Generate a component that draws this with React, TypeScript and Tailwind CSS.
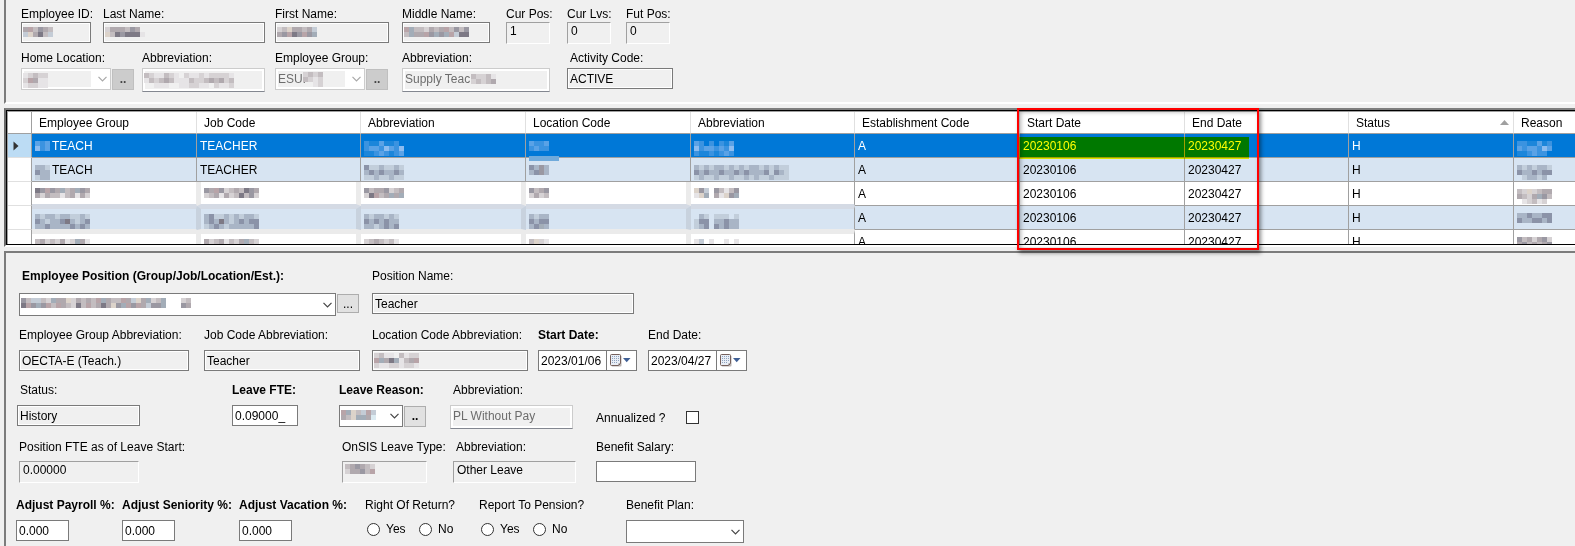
import { clsx } from "clsx";
import React from "react";

const SWATCHES: Record<string, string> = {
  "1": "#7d7985",
  "2": "#9a98a2",
  "3": "#b0a9ae",
  "4": "#c3bdc0",
  "5": "#d6d2d4",
  "6": "#e6e4e6",
  "7": "#a3adb8",
  "8": "#c4ccd6",
  "9": "#dcebf2",
  b: "#b8a4a8",
  c: "#dcd3ca",
  p: "#5aa2e6",
  q: "#3b93e0",
  r: "#8cbcf0",
  s: "#1c86da",
  t: "#70aadb",
  x: "#8b93a8",
  y: "#a9b5c6",
  z: "#c2cedb",
};

// Masked value, one character per 5px block. "." leaves the block empty.
const Mask = ({ rows }: { rows: string[] }) => (
  <svg
    aria-hidden="true"
    className="block shrink-0 overflow-visible"
    width={rows[0].length * 5}
    height="10"
    shapeRendering="crispEdges"
  >
    {rows.map((row, y) =>
      row
        .split("")
        .map((c, x) =>
          c === "." ? null : (
            <rect
              key={`${x}-${y}`}
              x={x * 5}
              y={y * 5}
              width="5"
              height="5"
              fill={SWATCHES[c]}
            />
          )
        )
    )}
  </svg>
);

type FieldProps = {
  id: string;
  label: string;
  bold?: boolean;
  indent?: boolean;
  className?: string;
  children: React.ReactNode;
};

const Field = ({ id, label, bold, indent, className, children }: FieldProps) => (
  <div className={clsx("flex flex-col items-start", className)}>
    <label
      htmlFor={id}
      className={clsx("whitespace-nowrap leading-4", {
        "font-bold": bold,
        "pl-[3px]": indent,
      })}
    >
      {label}
    </label>
    {children}
  </div>
);

const BOX = {
  edit: "h-[21px] border border-[#7a7a7a] bg-white px-[2px]",
  readonly:
    "h-[21px] border border-[#7a7a7a] bg-[#f0f0f0] px-[2px] shadow-[inset_0_0_0_1px_#fff]",
  disabled:
    "h-6 border border-[#ccc] border-b-[#838790] bg-[#f0f0f0] px-[2px] pb-[2px] text-[#6d6d6d] shadow-[inset_0_0_0_2px_#fff]",
  sunken:
    "h-[22px] border border-[#a0a0a0] border-r-white border-b-white bg-[#f0f0f0] px-[3px] pb-1",
};

type TextBoxProps = {
  id: string;
  kind: keyof typeof BOX;
  className: string;
  value?: string;
  mask?: string[];
  maskClass?: string;
};

const TextBox = ({
  id,
  kind,
  className,
  value = "",
  mask,
  maskClass = "left-[2px] top-[5px]",
}: TextBoxProps) => (
  <div className={clsx("relative", className)}>
    <input
      id={id}
      type="text"
      defaultValue={value}
      readOnly={kind !== "edit"}
      disabled={kind === "disabled"}
      className={clsx("block w-full outline-none", BOX[kind])}
    />
    {mask && (
      <div className={clsx("pointer-events-none absolute", maskClass)}>
        <Mask rows={mask} />
      </div>
    )}
  </div>
);

type ComboProps = {
  id: string;
  className: string;
  selectClass: string;
  value?: string;
  disabled?: boolean;
  mask?: string[];
  maskClass?: string;
};

const Combo = ({
  id,
  className,
  selectClass,
  value = "",
  disabled,
  mask,
  maskClass = "left-[2px] top-[5px]",
}: ComboProps) => (
  <div className={clsx("relative", className)}>
    <select
      id={id}
      disabled={disabled}
      className={clsx(
        "block w-full appearance-none border px-[2px] opacity-100 outline-none",
        disabled
          ? "border-[#ccc] bg-white bg-[linear-gradient(#f0f0f0,#f0f0f0)] bg-[length:67px_16px] bg-[position:2px_2px] bg-no-repeat text-[#6d6d6d]"
          : "border-[#7a7a7a] bg-white",
        selectClass
      )}
    >
      <option>{value}</option>
    </select>
    {mask && (
      <div className={clsx("pointer-events-none absolute", maskClass)}>
        <Mask rows={mask} />
      </div>
    )}
    <svg
      aria-hidden="true"
      className="pointer-events-none absolute inset-y-0 right-1 my-auto"
      width="9"
      height="6"
      viewBox="0 0 9 6"
      fill="none"
      stroke={disabled ? "#a8a8a8" : "#444"}
      strokeWidth="1.2"
    >
      <path d="M0.5 0.8 4.5 4.8 8.5 0.8" />
    </svg>
  </div>
);

const LookupButton = ({
  label,
  className,
  children,
}: {
  label: string;
  className: string;
  children: React.ReactNode;
}) => (
  <button
    type="button"
    aria-label={label}
    className={clsx(
      "ml-px mt-px flex w-[22px] items-end justify-center border leading-4",
      className
    )}
  >
    {children}
  </button>
);

const DateBox = ({ id, value }: { id: string; value: string }) => (
  <div className="flex h-[21px] w-[99px] border border-[#7a7a7a] bg-white">
    <input
      id={id}
      type="text"
      defaultValue={value}
      className="h-full w-[67px] px-[2px] outline-none"
    />
    <button
      type="button"
      aria-label="Open calendar"
      className="flex flex-1 items-center border-l border-[#7a7a7a] pl-[3px]"
    >
      <svg width="21" height="13" viewBox="0 0 21 13" aria-hidden="true">
        <rect x="1.5" y="1.5" width="10" height="11" rx="1" fill="#b9b4b2" />
        <path
          d="M0.5 1.5a1 1 0 0 1 1-1h8a1 1 0 0 1 1 1v8l-2 2h-7a1 1 0 0 1-1-1z"
          fill="#e9eef6"
          stroke="#75605c"
        />
        <path
          d="M2 2.5h7M2 4.5h7M2 6.5h7M2 8.5h6"
          stroke="#8fa3bf"
          strokeDasharray="1 1"
        />
        <path d="M8.5 11.5v-2h2z" fill="#75605c" />
        <path d="M13 4h7.5L16.7 8.2z" fill="#3f5f95" />
      </svg>
    </button>
  </div>
);

const YesNo = ({ name, legend }: { name: string; legend: string }) => (
  <fieldset>
    <legend className="whitespace-nowrap leading-4">{legend}</legend>
    <div className="mt-[7px] flex pl-[2px]">
      {["Yes", "No"].map((option) => (
        <label key={option} className="flex h-[18px] w-[52px] items-center gap-[6px]">
          <input
            type="radio"
            name={name}
            className="size-[13px] appearance-none rounded-full border border-[#333] bg-white"
          />
          {option}
        </label>
      ))}
    </div>
  </fieldset>
);

const COLUMNS = [
  { title: "Employee Group", width: "w-[165px]" },
  { title: "Job Code", width: "w-[164px]" },
  { title: "Abbreviation", width: "w-[165px]" },
  { title: "Location Code", width: "w-[165px]" },
  { title: "Abbreviation", width: "w-[164px]" },
  { title: "Establishment Code", width: "w-[165px]" },
  { title: "Start Date", width: "w-[165px]" },
  { title: "End Date", width: "w-[164px]" },
  { title: "Status", width: "w-[165px]" },
  { title: "Reason", width: "border-r-0" },
];

type Cell = { text?: string; mask?: string[] };

const tail: Cell[] = [
  { text: "A" },
  { text: "20230106" },
  { text: "20230427" },
  { text: "H" },
];

const ROWS: Cell[][] = [
  [
    { mask: ["pqp", "rqp"], text: "TEACH" },
    { text: "TEACHER" },
    { mask: ["qsspssq.", "qppqrpqr", "ssqpqsqp"] },
    { mask: ["pqqp", "qpqq", "....", "tttttt"] },
    { mask: ["pq.q.qsp", "rqppqpqr", "qssqsqpq"] },
    ...tail,
    { mask: ["qqsspsq", "pqppqrp", "ssqpqq."] },
  ],
  [
    { mask: ["yyz", "xyy", "zyy"], text: "TEACH" },
    { text: "TEACHER" },
    { mask: ["xzzyzzyz", "yxyxyyxy", "zzyzzyzz"] },
    { mask: ["xy2y", "yx2y"] },
    { mask: ["yzyzyyzyzyzyyzyzyzz", "xyxyyxyyxyxyyyxzxyz", "zyzzyzzyzzyzyzzyzzz"] },
    ...tail,
    { mask: ["yzyzyyz", "xyyxyxx", ".zyyzy."] },
  ],
  [
    { mask: ["12b23743723", "35344643635"] },
    { mask: ["23b25434123", "54363541425"] },
    { mask: ["24332543", "51b43737"] },
    { mask: ["2432", "5354"] },
    { mask: ["c28.24642", "6c7.36c27"] },
    ...tail,
    { mask: ["45c5433", "3453724", ".65465."] },
  ],
  [
    { mask: ["yzyyzyyzzyz", "xyzyyx1yzyx", "yyxyyyyxyxy"] },
    { mask: ["yxzzyzyzyyz", "yxy1yzyxyxx", "zyxyzyyyyyx"] },
    { mask: ["yzyyzyz", "xyxyxyy", "yyzyxyx"] },
    { mask: ["yzyy", "xyxx", "yx7y"] },
    { mask: [".yz.zzz.z", "zxx.yyxyy", "zyx.xyxyy"] },
    ...tail,
    { mask: ["yyxyyxx", "xyyxxyx"] },
  ],
  [
    { mask: ["43545365736", "32434723532"] },
    { mask: ["35436453745", "24314532423"] },
    { mask: ["5434546", "2315342"] },
    { mask: ["4c56", "3c52"] },
    { mask: ["68.6..6.6", "c28.23b27"] },
    ...tail,
    { mask: ["2435325", "3243432"] },
  ],
];

// Right edge of each cell, the masked rows smear it into a wide band.
const edge = (row: number, col: number) => {
  if (col === COLUMNS.length - 1) return "";
  if (row < 2 || col > 3) return "border-r border-r-[#a0a0a0]";
  const color =
    row === 3 ? "border-x-[#c8d2de]" : "border-x-[#ebebeb]";
  if (col === 0) return clsx("border-r", color);
  return clsx("border-r-[5px]", col === 1 && "border-l-4", color);
};

const rule = (row: number, col: number) => {
  if (row < 2 || col > 4) return "border-b border-b-[#a0a0a0]";
  if (row === 2) return "border-b-2 border-b-[#d4dae4]";
  if (row === 3)
    return "border-t-[3px] border-t-[#d4dae4] border-b border-b-[#ebebeb]";
  return "border-t-4 border-t-[#ebebeb] border-b border-b-[#a0a0a0]";
};

const PositionGrid = () => (
  <div className="relative mt-1 border-2 border-r-0 border-[#696969] border-t-[#808080] border-b-white">
    <div className="h-[135px] overflow-hidden border border-r-0 border-black">
      <div className="border-l border-t border-[#a0a0a0] bg-white">
        <table className="w-full table-fixed border-separate border-spacing-0 text-left">
          <thead>
            <tr className="h-[22px]">
              <th
                aria-label="Row marker"
                className="w-6 border-b border-r border-[#a0a0a0] p-0"
              />
              {COLUMNS.map(({ title, width }, i) => (
                <th
                  key={i}
                  className={clsx(
                    "whitespace-nowrap border-b border-r border-b-[#a0a0a0] border-r-[#e0e0e0] py-0 pl-[7px] pr-1 font-normal leading-4",
                    width
                  )}
                >
                  <span className="flex items-center justify-between">
                    {title}
                    {title === "Status" && (
                      <svg width="9" height="5" aria-hidden="true">
                        <path d="M0 5 4.5 0 9 5z" fill="#a0a0a0" />
                      </svg>
                    )}
                  </span>
                </th>
              ))}
            </tr>
          </thead>
          <tbody>
            {ROWS.map((cells, row) => (
              <tr
                key={row}
                className={clsx("h-6", {
                  "bg-[#0078d7] text-white": row === 0,
                  "bg-[#d7e4f2]": row % 2 === 1,
                })}
              >
                <td
                  className={clsx(
                    "border-b border-r border-b-[#e0e0e0] border-r-[#a0a0a0] p-0 pl-[5px]",
                    row === 0 ? "bg-[#bcdcf4]" : "bg-white"
                  )}
                >
                  {row === 0 && (
                    <svg width="7" height="10" aria-hidden="true">
                      <path d="M0.5 0.5v9l5-4.5z" fill="#333" />
                    </svg>
                  )}
                </td>
                {cells.map(({ text, mask }, col) => (
                  <td
                    key={col}
                    className={clsx(
                      "py-0 pl-[3px] pr-0 leading-4",
                      edge(row, col),
                      rule(row, col)
                    )}
                  >
                    <span className="flex h-4 items-center gap-[2px]">
                      {mask && <Mask rows={mask} />}
                      {text}
                    </span>
                  </td>
                ))}
              </tr>
            ))}
          </tbody>
        </table>
      </div>
    </div>
    {/* highlighter and callout frame over the date columns */}
    <div className="pointer-events-none absolute left-[1013px] top-[27px] h-[22px] w-[230px] bg-[#ffff00] mix-blend-multiply" />
    <div className="pointer-events-none absolute -top-[2px] left-[1011px] h-[142px] w-[242px] border-2 border-[#ff0000] shadow-[2px_3px_4px_rgba(0,0,0,0.45),inset_2px_2px_4px_rgba(0,0,0,0.3)]" />
  </div>
);

const EmployeeHeader = () => (
  <section className="grid grid-cols-[82px_39px_133px_127px_104px_61px_59px_auto] gap-y-[6px] border-b-2 border-l-2 border-b-white border-l-[#7c7c7c] pb-[10px] pl-[15px] pt-[6px]">
    <Field id="employee-id" label="Employee ID:">
      <TextBox id="employee-id" kind="readonly" className="w-[70px]" mask={["3b4234", "8c3148"]} />
    </Field>
    <Field id="last-name" label="Last Name:" className="col-span-2">
      <TextBox id="last-name" kind="readonly" className="w-[162px]" mask={["5333423.", "c4121116"]} />
    </Field>
    <Field id="first-name" label="First Name:">
      <TextBox id="first-name" kind="readonly" className="w-[114px]" mask={["54c33438", "32b12b27"]} />
    </Field>
    <Field id="middle-name" label="Middle Name:">
      <TextBox id="middle-name" kind="readonly" className="w-[88px]" mask={["b7445343b4242", "4733b2727b811"]} />
    </Field>
    <Field id="cur-pos" label="Cur Pos:">
      <TextBox id="cur-pos" kind="sunken" className="w-11" value="1" />
    </Field>
    <Field id="cur-lvs" label="Cur Lvs:">
      <TextBox id="cur-lvs" kind="sunken" className="w-11" value="0" />
    </Field>
    <Field id="fut-pos" label="Fut Pos:">
      <TextBox id="fut-pos" kind="sunken" className="w-11" value="0" />
    </Field>

    <Field id="home-location" label="Home Location:" className="col-span-2 gap-[2px]">
      <div className="flex">
        <Combo
          id="home-location"
          className="w-[90px]"
          selectClass="h-[22px]"
          disabled
          mask={["65455", "5b366", "65566"]}
        />
        <LookupButton
          label="Find home location"
          className="h-[21px] border-[#bfbfbf] bg-[#ccc] pb-[2px] font-bold text-[#444]"
        >
          ..
        </LookupButton>
      </div>
    </Field>
    <Field id="home-abbr" label="Abbreviation:" className="gap-[2px]">
      <TextBox
        id="home-abbr"
        kind="disabled"
        className="w-[123px]"
        mask={["4566456.5665655556", "645434666455434354", "..666..665566.5665"]}
      />
    </Field>
    <Field id="employee-group" label="Employee Group:" className="gap-[2px]">
      <div className="flex">
        <Combo
          id="employee-group"
          className="w-[90px]"
          selectClass="h-[22px]"
          disabled
          value="ESUF"
          mask={["5454", "4565", "..65"]}
          maskClass="left-7 top-1"
        />
        <LookupButton
          label="Find employee group"
          className="h-[21px] border-[#bfbfbf] bg-[#ccc] pb-[2px] font-bold text-[#444]"
        >
          ..
        </LookupButton>
      </div>
    </Field>
    <Field id="group-abbr" label="Abbreviation:" className="col-span-2 gap-[2px]">
      <TextBox
        id="group-abbr"
        kind="disabled"
        className="w-[148px]"
        value="Supply Teac"
        mask={["45546", "54543"]}
        maskClass="left-[69px] top-[6px]"
      />
    </Field>
    <Field id="activity-code" label="Activity Code:" indent className="col-span-2 gap-[2px]">
      <TextBox id="activity-code" kind="readonly" className="w-[106px]" value="ACTIVE" />
    </Field>
  </section>
);

const PositionDetails = () => (
  <section className="mt-1 flex-1 border-l-2 border-t-2 border-l-[#7c7c7c] border-t-[#7c7c7c] pt-[15px]">
    <div className="grid grid-cols-[353px_auto] pl-[13px]">
      <Field
        id="position"
        label="Employee Position (Group/Job/Location/Est.):"
        bold
        indent
        className="gap-[9px]"
      >
        <div className="flex">
          <Combo
            id="position"
            className="w-[317px]"
            selectClass="h-[23px]"
            mask={["248845733c53434b7344b38c37547...54", "1b272b4b34514b4313c27b2b38227...23"]}
          />
          <LookupButton label="Find position" className="h-[19px] border-[#adadad] bg-[#e1e1e1]">
            ...
          </LookupButton>
        </div>
      </Field>
      <Field id="position-name" label="Position Name:" className="gap-[9px]">
        <TextBox id="position-name" kind="readonly" className="w-[262px]" value="Teacher" />
      </Field>
    </div>

    <div className="mt-[11px] grid grid-cols-[185px_168px_166px_110px_auto] pl-[13px]">
      <Field id="eg-abbr" label="Employee Group Abbreviation:" className="gap-[7px]">
        <TextBox id="eg-abbr" kind="readonly" className="w-[170px]" value="OECTA-E (Teach.)" />
      </Field>
      <Field id="jc-abbr" label="Job Code Abbreviation:" className="gap-[7px]">
        <TextBox id="jc-abbr" kind="readonly" className="w-[156px]" value="Teacher" />
      </Field>
      <Field id="lc-abbr" label="Location Code Abbreviation:" className="gap-[7px]">
        <TextBox
          id="lc-abbr"
          kind="readonly"
          className="w-[156px]"
          mask={["5466.4655", "b7317643b", "566556556"]}
          maskClass="left-[2px] top-[3px]"
        />
      </Field>
      <Field id="start-date" label="Start Date:" bold className="gap-[7px]">
        <DateBox id="start-date" value="2023/01/06" />
      </Field>
      <Field id="end-date" label="End Date:" className="gap-[7px]">
        <DateBox id="end-date" value="2023/04/27" />
      </Field>
    </div>

    <div className="mt-[11px] grid grid-cols-[215px_107px_111px_146px_auto] pl-[11px]">
      <Field id="status" label="Status:" indent className="gap-[7px]">
        <TextBox id="status" kind="readonly" className="w-[123px]" value="History" />
      </Field>
      <Field id="leave-fte" label="Leave FTE:" bold className="gap-[7px]">
        <TextBox id="leave-fte" kind="edit" className="w-[66px]" value="0.09000_" />
      </Field>
      <Field id="leave-reason" label="Leave Reason:" bold className="gap-[7px]">
        <div className="flex">
          <Combo
            id="leave-reason"
            className="w-16"
            selectClass="h-[22px]"
            mask={["b7c48b8", "34c7739"]}
          />
          <LookupButton
            label="Find leave reason"
            className="h-[21px] border-[#adadad] bg-[#e1e1e1] pb-[2px] font-bold"
          >
            ..
          </LookupButton>
        </div>
      </Field>
      <Field id="reason-abbr" label="Abbreviation:" indent className="gap-[7px]">
        <TextBox id="reason-abbr" kind="disabled" className="w-[123px]" value="PL Without Pay" />
      </Field>
      <div className="flex items-start pt-7">
        <label htmlFor="annualized" className="w-[90px] leading-4">
          Annualized ?
        </label>
        <input
          id="annualized"
          type="checkbox"
          className="mt-px size-[13px] appearance-none border border-[#333] bg-white"
        />
      </div>
    </div>

    <div className="mt-[10px] grid grid-cols-[323px_111px_143px_auto] pl-[13px]">
      <Field id="position-fte" label="Position FTE as of Leave Start:" className="gap-[6px]">
        <TextBox id="position-fte" kind="sunken" className="w-[120px]" value="0.00000" />
      </Field>
      <Field id="onsis-type" label="OnSIS Leave Type:" className="gap-[6px]">
        <TextBox
          id="onsis-type"
          kind="sunken"
          className="w-[85px]"
          mask={["432345", "53324b"]}
          maskClass="left-[3px] top-[3px]"
        />
      </Field>
      <Field id="onsis-abbr" label="Abbreviation:" indent className="gap-[6px]">
        <TextBox id="onsis-abbr" kind="sunken" className="w-[123px]" value="Other Leave" />
      </Field>
      <Field id="benefit-salary" label="Benefit Salary:" className="gap-[6px]">
        <TextBox id="benefit-salary" kind="edit" className="w-[100px]" />
      </Field>
    </div>

    <div className="mt-[14px] grid grid-cols-[106px_117px_126px_114px_147px_auto] pl-[10px]">
      <Field id="adjust-payroll" label="Adjust Payroll %:" bold className="gap-[7px]">
        <TextBox id="adjust-payroll" kind="edit" className="w-[53px]" value="0.000" />
      </Field>
      <Field id="adjust-seniority" label="Adjust Seniority %:" bold className="gap-[7px]">
        <TextBox id="adjust-seniority" kind="edit" className="w-[53px]" value="0.000" />
      </Field>
      <Field id="adjust-vacation" label="Adjust Vacation %:" bold className="gap-[7px]">
        <TextBox id="adjust-vacation" kind="edit" className="w-[53px]" value="0.000" />
      </Field>
      <YesNo name="right-of-return" legend="Right Of Return?" />
      <YesNo name="report-to-pension" legend="Report To Pension?" />
      <Field id="benefit-plan" label="Benefit Plan:" className="gap-[7px]">
        <Combo id="benefit-plan" className="w-[118px]" selectClass="h-[23px]" />
      </Field>
    </div>
  </section>
);

export default function App() {
  return (
    <main className="flex min-h-screen flex-col overflow-hidden bg-[#f0f0f0] pl-1 font-['Liberation_Sans',Arial,sans-serif] text-[12px] text-black">
      <EmployeeHeader />
      <PositionGrid />
      <PositionDetails />
    </main>
  );
}
